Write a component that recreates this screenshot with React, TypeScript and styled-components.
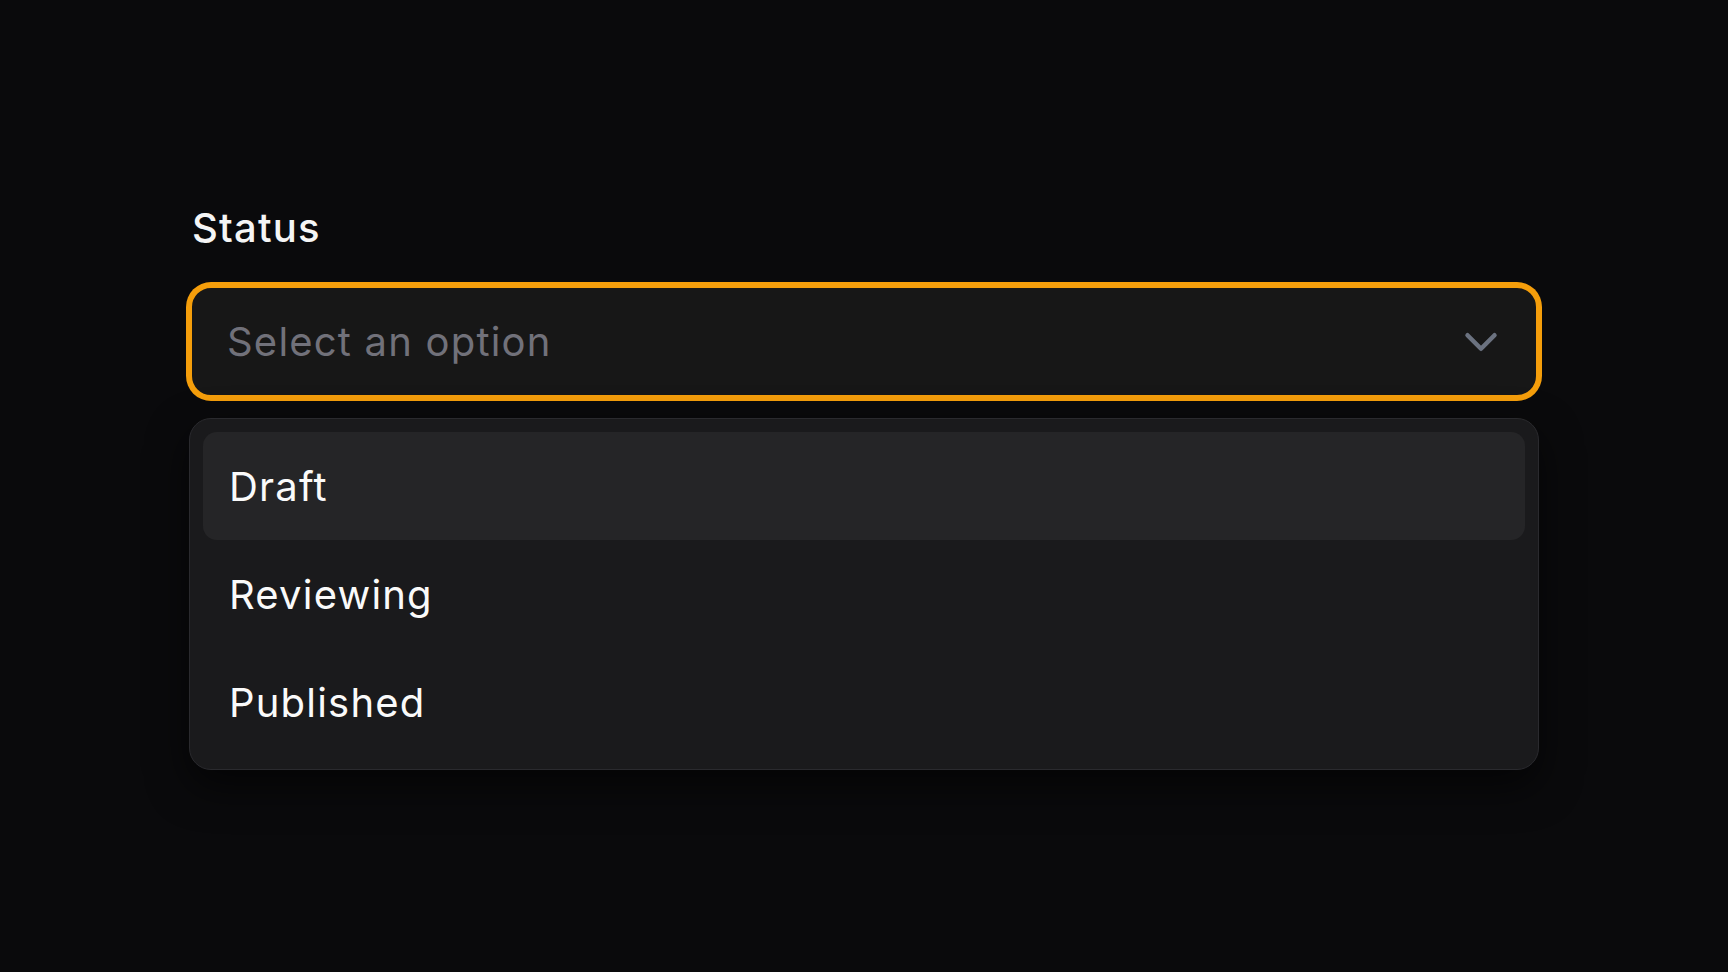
import styled, { createGlobalStyle } from "styled-components";

const GlobalStyle = createGlobalStyle`
  html, body {
    margin: 0;
    background: #0a0a0c;
    font-family: Inter, "Noto Sans", sans-serif;
    -webkit-font-smoothing: antialiased;
  }
`;

const Page = styled.div`
  min-height: 972px;
  padding-top: 204px;
  box-sizing: border-box;
`;

const Field = styled.div`
  width: 1350px;
  margin: 0 auto;
  display: flex;
  flex-direction: column;
`;

const Label = styled.label`
  font-size: 40px;
  line-height: 48px;
  font-weight: 500;
  letter-spacing: 0.03em;
  color: #f5f5f5;
  padding-left: 3px;
  margin-bottom: 33px;
`;

const Trigger = styled.button`
  display: flex;
  align-items: center;
  justify-content: space-between;
  height: 113px;
  padding: 0 28px 0 35px;
  background: #171717;
  border: 3px solid #f59e0b;
  box-shadow: 0 0 0 3px #f59e0b;
  border-radius: 22px;
  font-family: inherit;
  cursor: pointer;
`;

const Placeholder = styled.span`
  font-size: 40px;
  letter-spacing: 0.03em;
  color: #71717a;
`;

const Menu = styled.ul`
  list-style: none;
  margin: 20px 0 0;
  padding: 13px;
  background: #1a1a1c;
  border: 1px solid #2a2a2e;
  border-radius: 22px;
  box-shadow: 0 16px 40px rgba(0, 0, 0, 0.6);
`;

const Option = styled.li<{ $active?: boolean }>`
  display: flex;
  align-items: center;
  height: 108px;
  padding: 0 26px;
  border-radius: 14px;
  font-size: 40px;
  letter-spacing: 0.03em;
  color: #fafafa;
  background: ${(p) => (p.$active ? "#252527" : "transparent")};
`;

const Chevron = () => (
  <svg width="54" height="54" viewBox="0 0 24 24" fill="none" stroke="#6b7280" strokeWidth="2" strokeLinecap="round" strokeLinejoin="round">
    <path d="m6 9 6 6 6-6" />
  </svg>
);

const options = ["Draft", "Reviewing", "Published"];

export default function App() {
  return (
    <>
      <GlobalStyle />
      <Page>
        <Field>
          <Label>Status</Label>
          <Trigger>
            <Placeholder>Select an option</Placeholder>
            <Chevron />
          </Trigger>
          <Menu>
            {options.map((o, i) => (
              <Option key={o} $active={i === 0}>
                {o}
              </Option>
            ))}
          </Menu>
        </Field>
      </Page>
    </>
  );
}
